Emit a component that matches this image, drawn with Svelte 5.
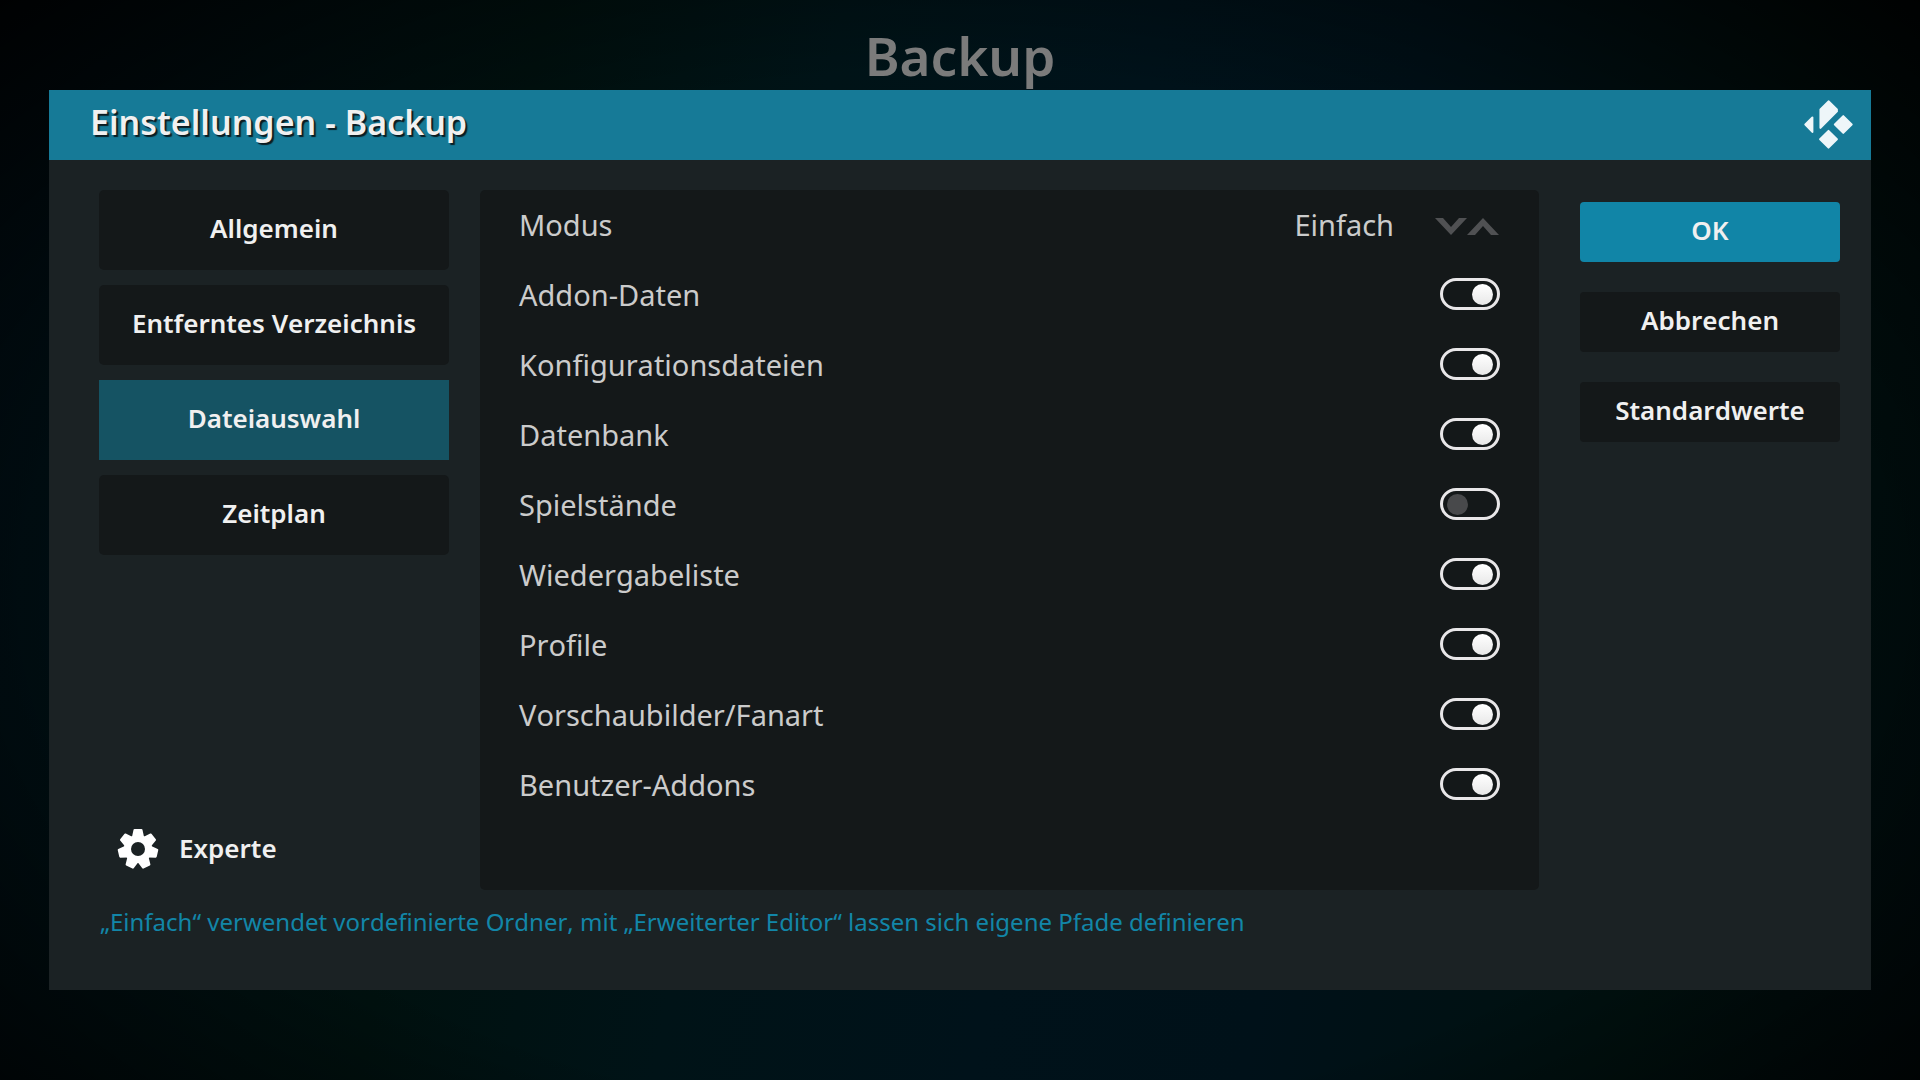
<script>
  let categories = ['Allgemein', 'Entferntes Verzeichnis', 'Dateiauswahl', 'Zeitplan'];
  let active = $state('Dateiauswahl');
  let mode = $state(0);
  const modes = ['Einfach', 'Erweiterter Editor'];
  let settings = $state([
    { id: 'addon-data', label: 'Addon-Daten', on: true },
    { id: 'config', label: 'Konfigurationsdateien', on: true },
    { id: 'database', label: 'Datenbank', on: true },
    { id: 'saves', label: 'Spielstände', on: false },
    { id: 'playlists', label: 'Wiedergabeliste', on: true },
    { id: 'profiles', label: 'Profile', on: true },
    { id: 'thumbnails', label: 'Vorschaubilder/Fanart', on: true },
    { id: 'user-addons', label: 'Benutzer-Addons', on: true },
  ]);
  const step = (d) => (mode = (mode + d + modes.length) % modes.length);
  const teeth = Array.from({ length: 7 }, (_, i) => (i * 360) / 7);
</script>

<div class="screen">
  <h1 class="window-title">Backup</h1>

  <main class="dialog">
    <header class="dialog-header">
      <h2>Einstellungen - Backup</h2>
      <svg class="logo" viewBox="0 0 146 146" aria-hidden="true">
        <g fill="#eef6f9" stroke="#eef6f9" stroke-width="6" stroke-linejoin="round">
          <path d="M4 73 25 52V95Z" />
          <path d="M73 4 98 28V34L49 83V28Z" />
          <path d="M117 48 142 73 117 98 92 73Z" />
          <path d="M73 92 98 117 73 142 48 117Z" />
        </g>
      </svg>
    </header>

    <div class="columns">
      <nav class="categories" aria-label="Kategorien">
        {#each categories as name}
          <button class="category" class:active={name === active} onclick={() => (active = name)}>{name}</button>
        {/each}
        <button class="level">
          <svg viewBox="-21 -21 42 42" aria-hidden="true">
            <mask id="hub">
              <rect x="-21" y="-21" width="42" height="42" fill="#fff" />
              <circle r="7" fill="#000" />
            </mask>
            <g fill="#fff" mask="url(#hub)">
              <circle r="14" />
              {#each teeth as angle}
                <path transform="rotate({angle})" d="M-5 -12 -3.5 -19H3.5L5 -12Z" stroke="#fff" stroke-width="2" stroke-linejoin="round" />
              {/each}
            </g>
          </svg>
          Experte
        </button>
      </nav>

      <section class="settings">
        <div class="row">
          <label for="mode">Modus</label>
          <div class="spinner">
            <select id="mode" bind:value={mode}>
              {#each modes as m, i}<option value={i}>{m}</option>{/each}
            </select>
            <div class="arrows">
              <button aria-label="Nächster Modus" onclick={() => step(1)}>
                <svg viewBox="0 0 32 17"><path d="M0 0H8L16 9 24 0H32L16 17Z" /></svg>
              </button>
              <button aria-label="Vorheriger Modus" onclick={() => step(-1)}>
                <svg viewBox="0 0 32 17"><path d="M0 17H8L16 8 24 17H32L16 0Z" /></svg>
              </button>
            </div>
          </div>
        </div>
        {#each settings as s (s.id)}
          <div class="row">
            <label for={s.id}>{s.label}</label>
            <input id={s.id} class="toggle" type="checkbox" role="switch" bind:checked={s.on} />
          </div>
        {/each}
      </section>

      <div class="actions">
        <button class="action primary">OK</button>
        <button class="action">Abbrechen</button>
        <button class="action">Standardwerte</button>
      </div>
    </div>

    <p class="hint">„Einfach“ verwendet vordefinierte Ordner, mit „Erweiterter Editor“ lassen sich eigene Pfade definieren</p>
  </main>
</div>

<style>
  :global(body) {
    background: #000508;
  }

  .screen {
    box-sizing: border-box;
    min-height: 100vh;
    font-family: 'Noto Sans', sans-serif;
    font-kerning: none;
    color: #f0f0f0;
    background:
      radial-gradient(ellipse at 50% 55%, transparent 62%, rgba(0, 0, 0, 0.9) 100%),
      linear-gradient(100deg, #000d14 0%, #00110f 26%, #001317 40%, #00121a 55%, #001119 68%, #00110f 86%, #000b0d 100%);
  }

  h1,
  h2,
  p {
    margin: 0;
  }

  button,
  select {
    padding: 0;
    border: 0;
    background: none;
    color: inherit;
    font: inherit;
    font-kerning: none;
    cursor: pointer;
  }

  .window-title {
    box-sizing: border-box;
    height: 90px;
    padding-top: 22px;
    font-size: 53px;
    font-weight: 600;
    line-height: 68px;
    text-align: center;
    color: #7b7b7b;
  }

  .dialog {
    margin: 0 49px;
    background: #1b2224;
  }

  .dialog-header {
    display: flex;
    align-items: center;
    justify-content: space-between;
    height: 70px;
    padding: 0 18px 0 41px;
    background: #167a97;
  }

  .dialog-header h2 {
    padding-bottom: 6px;
    font-size: 34px;
    font-weight: 600;
    line-height: 40px;
    text-shadow: 2px 2px 1px #0b1c22;
  }

  .logo {
    width: 49px;
    height: 49px;
    padding-bottom: 2px;
  }

  .columns {
    display: grid;
    grid-template-columns: 350px 1fr 260px;
    padding: 30px 31px 0 50px;
  }

  .categories {
    display: flex;
    flex-direction: column;
    gap: 15px;
    font-size: 26px;
    font-weight: 600;
  }

  .category {
    height: 80px;
    padding-bottom: 4px;
    border-radius: 5px;
    background: #141819;
  }

  .category.active {
    border-radius: 0;
    background: #155363;
  }

  .level {
    display: flex;
    align-items: center;
    gap: 20px;
    height: 80px;
    margin-top: auto;
    padding: 0 0 4px 18px;
  }

  .level svg {
    width: 42px;
    height: 42px;
    padding-top: 2px;
  }

  .settings {
    margin: 0 41px 0 31px;
    padding-bottom: 70px;
    border-radius: 5px;
    background: #141819;
    font-size: 29px;
    color: #cbcbcb;
  }

  .row {
    box-sizing: border-box;
    display: flex;
    align-items: center;
    justify-content: space-between;
    height: 70px;
    padding: 0 39px 2px;
  }

  .spinner {
    display: flex;
    align-items: center;
    gap: 41px;
  }

  .spinner select {
    appearance: none;
    text-align-last: right;
  }

  .arrows {
    display: flex;
    padding: 4px 1px 0 0;
  }

  .arrows button {
    display: flex;
  }

  .arrows svg {
    width: 32px;
    height: 17px;
    fill: #505153;
  }

  .toggle {
    appearance: none;
    box-sizing: border-box;
    display: flex;
    align-items: center;
    width: 60px;
    height: 32px;
    margin: 0;
    padding: 0 4px;
    border: 3px solid #e9e7e9;
    border-radius: 16px;
    cursor: pointer;
  }

  .toggle::before {
    content: '';
    width: 21px;
    height: 21px;
    border-radius: 50%;
    background: #48494b;
  }

  .toggle:checked {
    justify-content: flex-end;
  }

  .toggle:checked::before {
    background: linear-gradient(#fff, #e8e8e8);
  }

  .actions {
    display: flex;
    flex-direction: column;
    gap: 30px;
    padding-top: 12px;
    font-size: 26px;
    font-weight: 600;
  }

  .action {
    height: 60px;
    padding-bottom: 4px;
    border-radius: 4px;
    background: #141819;
  }

  .action.primary {
    background: #1185a7;
  }

  .hint {
    padding: 15px 51px 51px;
    font-size: 24px;
    line-height: 34px;
    color: #1286a8;
  }
</style>
